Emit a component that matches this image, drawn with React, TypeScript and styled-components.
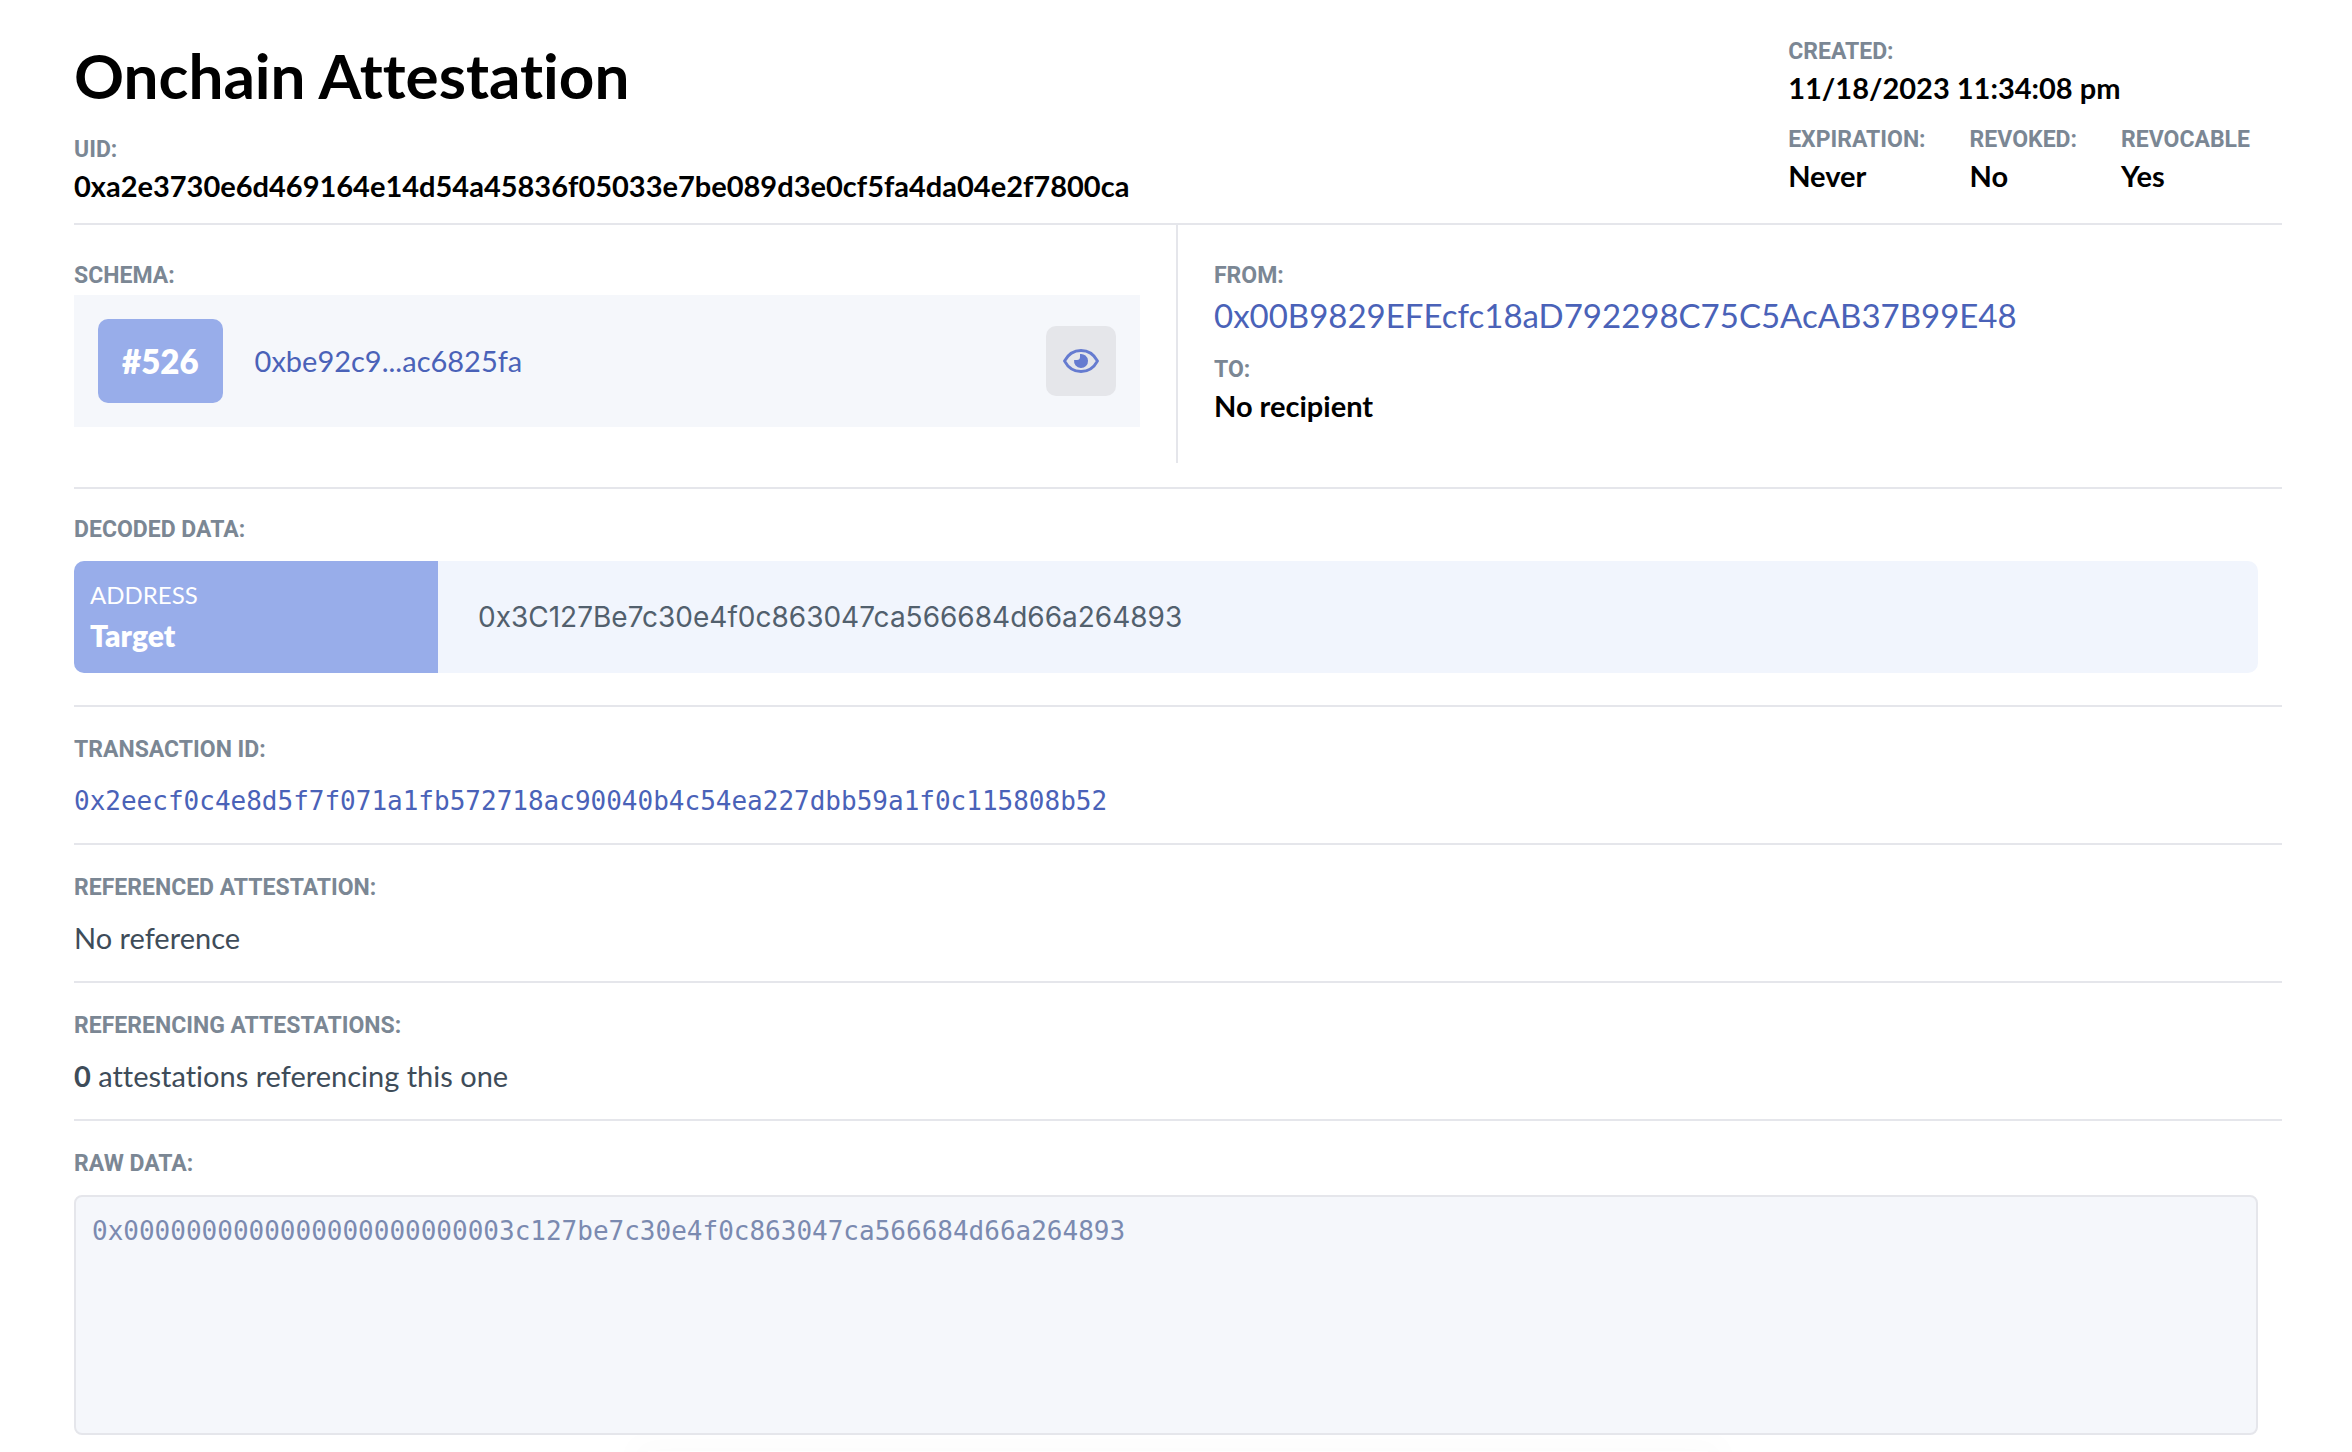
import React from "react";
import styled, { createGlobalStyle } from "styled-components";

const sans = `Lato, "Noto Sans", sans-serif`;
const heading = `Roboto, "Liberation Sans", sans-serif`;
const grotesk = `Inter, Roboto, sans-serif`;
const mono = `"DejaVu Sans Mono", "Liberation Mono", monospace`;
const line = "#e5e6eb";

const GlobalStyle = createGlobalStyle`
  * { box-sizing: border-box; }
  body {
    margin: 0;
    background: #fff;
    color: #000;
    font-family: ${sans};
    font-variant-ligatures: none;
  }
  h1, h2, p { margin: 0; }
`;

const Page = styled.main`
  display: flex;
  flex-direction: column;
  min-height: 100vh;
  padding: 33px 70px 0 74px;
`;

const Header = styled.header`
  display: flex;
  justify-content: space-between;
  padding-bottom: 16px;
  border-bottom: 2px solid ${line};
`;

const Heading = styled.div`
  display: flex;
  flex-direction: column;
  gap: 16px;
  padding-top: 2px;
`;

const Title = styled.h1`
  font-size: 62px;
  line-height: 80px;
  font-weight: 700;
`;

const Field = styled.div``;

const Label = styled.h2`
  padding-top: 2px;
  font-family: ${heading};
  font-size: 23px;
  line-height: 34px;
  font-weight: 700;
  color: #7b8794;
`;

const Value = styled.p`
  padding-bottom: 2px;
  font-size: 29px;
  line-height: 38px;
  font-weight: 700;
`;

const Meta = styled.div`
  display: flex;
  flex-direction: column;
  gap: 12px;
  padding-right: 32px;
`;

const MetaRow = styled.div`
  display: flex;
  gap: 44px;
`;

const Parties = styled.section`
  display: grid;
  grid-template-columns: 1fr 1fr;
  padding-bottom: 24px;
  border-bottom: 2px solid ${line};
`;

const SchemaSide = styled.div`
  display: flex;
  flex-direction: column;
  gap: 2px;
  padding: 32px 36px 36px 0;
  border-right: 2px solid ${line};
`;

const PeopleSide = styled.div`
  display: flex;
  flex-direction: column;
  gap: 14px;
  padding: 32px 0 0 36px;
`;

const SchemaCard = styled.div`
  display: flex;
  align-items: center;
  gap: 32px;
  padding: 24px;
  background: #f5f7fb;
`;

const Badge = styled.span`
  padding: 20px 24px;
  border-radius: 10px;
  background: #98adea;
  color: #fff;
  font-size: 33px;
  line-height: 44px;
  font-weight: 800;
`;

const Link = styled.a<{ $large?: boolean }>`
  color: #4a62b8;
  font-size: ${(p) => (p.$large ? 33 : 29)}px;
  line-height: 44px;
  font-weight: 400;
  text-decoration: none;
`;

const EyeButton = styled.button`
  display: grid;
  place-items: center;
  width: 70px;
  height: 70px;
  margin-left: auto;
  padding: 0;
  border: 0;
  border-radius: 10px;
  background: #e5e6ea;
  color: #657bd0;
`;

const Section = styled.section`
  display: flex;
  flex-direction: column;
  gap: 14px;
  padding: 24px 0 22px;
  border-bottom: 2px solid ${line};
`;

const DecodedSection = styled(Section)`
  padding: 22px 0 32px;
`;

const RawSection = styled(Section)`
  padding-bottom: 0;
  border-bottom: 0;
`;

const Decoded = styled.div`
  display: flex;
  margin-right: 24px;
  border-radius: 10px;
  overflow: hidden;
  background: #f1f5fd;
`;

const DecodedKey = styled.div`
  width: 364px;
  padding: 14px 16px 18px;
  background: #98adea;
  color: #fff;
`;

const KeyType = styled.p`
  font-size: 24px;
  line-height: 40px;
`;

const KeyName = styled.p`
  font-size: 30px;
  line-height: 40px;
  font-weight: 800;
`;

const DecodedValue = styled.p`
  align-self: center;
  padding-left: 40px;
  color: #52606d;
  font-family: ${grotesk};
  font-size: 28px;
  line-height: 40px;
`;

const HashLink = styled(Link)`
  font-family: ${mono};
  font-size: 26px;
  line-height: 40px;
`;

const Text = styled.p`
  padding-bottom: 2px;
  color: #3e4c59;
  font-size: 29px;
  line-height: 38px;
`;

const RawData = styled.textarea`
  height: 240px;
  margin-right: 24px;
  padding: 14px 16px;
  border: 2px solid ${line};
  border-radius: 8px;
  background: #f5f7fb;
  color: #7b8ab0;
  font-family: ${mono};
  font-size: 26px;
  line-height: 40px;
  resize: none;
`;

const Footer = styled.footer`
  display: flex;
  flex: 1;
  flex-direction: column;
  justify-content: flex-end;
  min-height: 16px;
  overflow: hidden;
`;

const FooterShade = styled.div`
  width: 48%;
  height: 1px;
  margin: 0 auto;
  box-shadow: 0 8px 32px 16px rgba(0, 0, 0, 0.02);
`;

const uid = "0xa2e3730e6d469164e14d54a45836f05033e7be089d3e0cf5fa4da04e2f7800ca";

function EyeIcon() {
  return (
    <svg width="36" height="24" viewBox="0 0 36 24" aria-hidden="true">
      <path
        d="M1.5 12C5 5.5 11 1.5 18 1.5S31 5.5 34.5 12C31 18.5 25 22.5 18 22.5S5 18.5 1.5 12Z"
        fill="none"
        stroke="currentColor"
        strokeWidth="2.8"
        strokeLinejoin="round"
      />
      <path d="M17 5.1A7 7 0 1 1 11.1 11H14A3 3 0 0 0 17 8Z" fill="currentColor" />
    </svg>
  );
}

export default function App() {
  return (
    <>
      <GlobalStyle />
      <Page>
        <Header>
          <Heading>
            <Title>Onchain Attestation</Title>
            <Field>
              <Label>UID:</Label>
              <Value>{uid}</Value>
            </Field>
          </Heading>
          <Meta>
            <Field>
              <Label>CREATED:</Label>
              <Value>11/18/2023 11:34:08 pm</Value>
            </Field>
            <MetaRow>
              <Field>
                <Label>EXPIRATION:</Label>
                <Value>Never</Value>
              </Field>
              <Field>
                <Label>REVOKED:</Label>
                <Value>No</Value>
              </Field>
              <Field>
                <Label>REVOCABLE</Label>
                <Value>Yes</Value>
              </Field>
            </MetaRow>
          </Meta>
        </Header>

        <Parties>
          <SchemaSide>
            <Label>SCHEMA:</Label>
            <SchemaCard>
              <Badge>#526</Badge>
              <Link href="#schema">0xbe92c9...ac6825fa</Link>
              <EyeButton type="button" aria-label="View schema">
                <EyeIcon />
              </EyeButton>
            </SchemaCard>
          </SchemaSide>
          <PeopleSide>
            <Field>
              <Label>FROM:</Label>
              <Link $large href="#from">0x00B9829EFEcfc18aD792298C75C5AcAB37B99E48</Link>
            </Field>
            <Field>
              <Label>TO:</Label>
              <Value>No recipient</Value>
            </Field>
          </PeopleSide>
        </Parties>

        <DecodedSection>
          <Label>DECODED DATA:</Label>
          <Decoded>
            <DecodedKey>
              <KeyType>ADDRESS</KeyType>
              <KeyName>Target</KeyName>
            </DecodedKey>
            <DecodedValue>0x3C127Be7c30e4f0c863047ca566684d66a264893</DecodedValue>
          </Decoded>
        </DecodedSection>

        <Section>
          <Label>TRANSACTION ID:</Label>
          <HashLink href="#transaction">
            0x2eecf0c4e8d5f7f071a1fb572718ac90040b4c54ea227dbb59a1f0c115808b52
          </HashLink>
        </Section>

        <Section>
          <Label>REFERENCED ATTESTATION:</Label>
          <Text>No reference</Text>
        </Section>

        <Section>
          <Label>REFERENCING ATTESTATIONS:</Label>
          <Text>
            <b>0</b> attestations referencing this one
          </Text>
        </Section>

        <RawSection>
          <Label as="label" htmlFor="raw-data">RAW DATA:</Label>
          <RawData
            id="raw-data"
            readOnly
            defaultValue="0x0000000000000000000000003c127be7c30e4f0c863047ca566684d66a264893"
          />
        </RawSection>
        <Footer>
          <FooterShade />
        </Footer>
      </Page>
    </>
  );
}
